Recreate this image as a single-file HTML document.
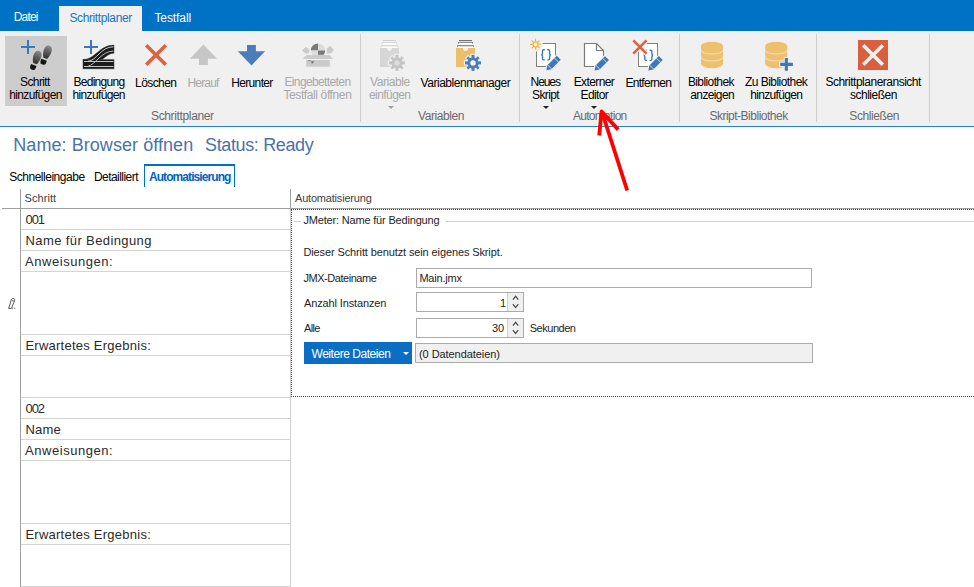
<!DOCTYPE html>
<html><head><meta charset="utf-8"><style>
html,body{margin:0;padding:0;width:974px;height:587px;overflow:hidden;background:#fff;position:relative}
.r{position:absolute}
.t{position:absolute;white-space:pre;font-family:"Liberation Sans",sans-serif}
svg{position:absolute}
</style></head><body>
<div class="r" style="left:0;top:0;width:974px;height:31px;background:#0072C6"></div>
<div class="r" style="left:59px;top:6px;width:83px;height:25px;background:#F0F0F0"></div>
<div class="r" style="left:0;top:31px;width:974px;height:95px;background:#F0F0F0"></div>
<div class="r" style="left:0;top:126px;width:974px;height:1px;background:#2A7FCB"></div>
<div class="r" style="left:5px;top:36px;width:62px;height:70px;background:#CDCDCD"></div>
<div class="r" style="left:360px;top:34px;width:1px;height:88px;background:#CECECE"></div>
<div class="r" style="left:519px;top:34px;width:1px;height:88px;background:#CECECE"></div>
<div class="r" style="left:679px;top:34px;width:1px;height:88px;background:#CECECE"></div>
<div class="r" style="left:816px;top:34px;width:1px;height:88px;background:#CECECE"></div>
<div class="r" style="left:929px;top:34px;width:1px;height:88px;background:#CECECE"></div>
<div class="t" id="tab1" style="left:13.80px;top:11.00px;font-size:12px;line-height:12px;letter-spacing:-0.850px;color:#FFFFFF;font-weight:normal">Datei</div>
<div class="t" id="tab2" style="left:69.40px;top:12.00px;font-size:12px;line-height:12px;letter-spacing:-0.375px;color:#1B72C4;font-weight:normal">Schrittplaner</div>
<div class="t" id="tab3" style="left:154.40px;top:12.00px;font-size:12px;line-height:12px;letter-spacing:-0.086px;color:#FFFFFF;font-weight:normal">Testfall</div>
<div class="t" id="b1a" style="left:20.00px;top:76.00px;font-size:12px;line-height:12px;letter-spacing:-0.600px;color:#000000;font-weight:normal">Schritt</div>
<div class="t" id="b1b" style="left:9.20px;top:89.00px;font-size:12px;line-height:12px;letter-spacing:-0.611px;color:#000000;font-weight:normal">hinzufügen</div>
<div class="t" id="b2a" style="left:73.50px;top:76.00px;font-size:12px;line-height:12px;letter-spacing:-0.725px;color:#000000;font-weight:normal">Bedingung</div>
<div class="t" id="b2b" style="left:72.40px;top:89.00px;font-size:12px;line-height:12px;letter-spacing:-0.622px;color:#000000;font-weight:normal">hinzufügen</div>
<div class="t" id="b3" style="left:135.10px;top:76.50px;font-size:12px;line-height:12px;letter-spacing:-0.583px;color:#000000;font-weight:normal">Löschen</div>
<div class="t" id="b4" style="left:187.40px;top:76.50px;font-size:12px;line-height:12px;letter-spacing:-0.800px;color:#A8A8A8;font-weight:normal">Herauf</div>
<div class="t" id="b5" style="left:231.30px;top:76.50px;font-size:12px;line-height:12px;letter-spacing:-0.671px;color:#000000;font-weight:normal">Herunter</div>
<div class="t" id="b6a" style="left:284.40px;top:76.00px;font-size:12px;line-height:12px;letter-spacing:-0.617px;color:#A8A8A8;font-weight:normal">Eingebetteten</div>
<div class="t" id="b6b" style="left:283.40px;top:89.00px;font-size:12px;line-height:12px;letter-spacing:-0.386px;color:#A8A8A8;font-weight:normal">Testfall öffnen</div>
<div class="t" id="b7a" style="left:370.00px;top:76.00px;font-size:12px;line-height:12px;letter-spacing:-0.429px;color:#A8A8A8;font-weight:normal">Variable</div>
<div class="t" id="b7b" style="left:369.00px;top:88.50px;font-size:12px;line-height:12px;letter-spacing:-0.571px;color:#A8A8A8;font-weight:normal">einfügen</div>
<div class="t" id="b8" style="left:420.60px;top:76.50px;font-size:12px;line-height:12px;letter-spacing:-0.473px;color:#000000;font-weight:normal">Variablenmanager</div>
<div class="t" id="b9a" style="left:530.60px;top:76.00px;font-size:12px;line-height:12px;letter-spacing:-1.100px;color:#000000;font-weight:normal">Neues</div>
<div class="t" id="b9b" style="left:532.00px;top:88.50px;font-size:12px;line-height:12px;letter-spacing:-0.600px;color:#000000;font-weight:normal">Skript</div>
<div class="t" id="b10a" style="left:573.70px;top:76.00px;font-size:12px;line-height:12px;letter-spacing:-0.614px;color:#000000;font-weight:normal">Externer</div>
<div class="t" id="b10b" style="left:580.60px;top:88.50px;font-size:12px;line-height:12px;letter-spacing:-0.640px;color:#000000;font-weight:normal">Editor</div>
<div class="t" id="b11" style="left:625.50px;top:76.50px;font-size:12px;line-height:12px;letter-spacing:-0.713px;color:#000000;font-weight:normal">Entfernen</div>
<div class="t" id="b12a" style="left:687.90px;top:76.00px;font-size:12px;line-height:12px;letter-spacing:-0.600px;color:#000000;font-weight:normal">Bibliothek</div>
<div class="t" id="b12b" style="left:690.30px;top:88.50px;font-size:12px;line-height:12px;letter-spacing:-0.629px;color:#000000;font-weight:normal">anzeigen</div>
<div class="t" id="b13a" style="left:745.00px;top:76.00px;font-size:12px;line-height:12px;letter-spacing:-0.542px;color:#000000;font-weight:normal">Zu Bibliothek</div>
<div class="t" id="b13b" style="left:750.20px;top:88.50px;font-size:12px;line-height:12px;letter-spacing:-0.656px;color:#000000;font-weight:normal">hinzufügen</div>
<div class="t" id="b14a" style="left:825.40px;top:76.00px;font-size:12px;line-height:12px;letter-spacing:-0.495px;color:#000000;font-weight:normal">Schrittplaneransicht</div>
<div class="t" id="b14b" style="left:850.00px;top:88.50px;font-size:12px;line-height:12px;letter-spacing:-0.500px;color:#000000;font-weight:normal">schließen</div>
<div class="t" id="g1" style="left:151.00px;top:110.00px;font-size:12px;line-height:12px;letter-spacing:-0.358px;color:#6A6A6A;font-weight:normal">Schrittplaner</div>
<div class="t" id="g2" style="left:418.00px;top:109.50px;font-size:12px;line-height:12px;letter-spacing:-0.413px;color:#6A6A6A;font-weight:normal">Variablen</div>
<div class="t" id="g3" style="left:572.90px;top:110.00px;font-size:12px;line-height:12px;letter-spacing:-0.700px;color:#6A6A6A;font-weight:normal">Automation</div>
<div class="t" id="g4" style="left:709.40px;top:109.50px;font-size:12px;line-height:12px;letter-spacing:-0.494px;color:#6A6A6A;font-weight:normal">Skript-Bibliothek</div>
<div class="t" id="g5" style="left:849.30px;top:109.50px;font-size:12px;line-height:12px;letter-spacing:-0.412px;color:#6A6A6A;font-weight:normal">Schließen</div>
<div class="r" style="left:388px;top:106px;width:0;height:0;border-left:3px solid transparent;border-right:3px solid transparent;border-top:3px solid #A0A0A0"></div>
<div class="r" style="left:543px;top:106px;width:0;height:0;border-left:3px solid transparent;border-right:3px solid transparent;border-top:3px solid #1E1E1E"></div>
<div class="r" style="left:591px;top:106px;width:0;height:0;border-left:3px solid transparent;border-right:3px solid transparent;border-top:3px solid #1E1E1E"></div>
<div class="t" id="title" style="left:13.30px;top:136.00px;font-size:18px;line-height:18px;letter-spacing:0.058px;color:#4A72AA;font-weight:normal">Name: Browser öffnen</div>
<div class="t" id="title2" style="left:205.10px;top:136.00px;font-size:18px;line-height:18px;letter-spacing:-0.375px;color:#4A72AA;font-weight:normal">Status: Ready</div>
<div class="t" id="st1" style="left:9.20px;top:171.00px;font-size:12px;line-height:12px;letter-spacing:-0.477px;color:#000000;font-weight:normal">Schnelleingabe</div>
<div class="t" id="st2" style="left:93.90px;top:171.00px;font-size:12px;line-height:12px;letter-spacing:-0.540px;color:#000000;font-weight:normal">Detailliert</div>
<div class="r" style="left:144px;top:164px;width:89px;height:21px;border:1px solid #0072C6;border-top:2px solid #0072C6;border-bottom:none"></div>
<div class="t" id="st3" style="left:148.90px;top:171.00px;font-size:12px;line-height:12px;letter-spacing:-0.914px;color:#0064C4;font-weight:bold">Automatisierung</div>
<div class="r" style="left:20px;top:189px;width:1px;height:398px;background:#A0A0A0"></div>
<div class="r" style="left:290px;top:189px;width:1px;height:20px;background:#A0A0A0"></div>
<div class="r" style="left:2px;top:208px;width:972px;height:1px;background:#A0A0A0"></div>
<div class="t" id="h1" style="left:24.60px;top:193.00px;font-size:11px;line-height:11px;letter-spacing:0.067px;color:#404040;font-weight:normal">Schritt</div>
<div class="t" id="h2" style="left:295.00px;top:193.00px;font-size:11px;line-height:11px;letter-spacing:-0.193px;color:#404040;font-weight:normal">Automatisierung</div>
<div class="r" style="left:290px;top:209px;width:1px;height:378px;background:#D0D0D0"></div>
<div class="r" style="left:21px;top:229px;width:269px;height:1px;background:#D4D4D4"></div>
<div class="r" style="left:21px;top:250px;width:269px;height:1px;background:#D4D4D4"></div>
<div class="r" style="left:21px;top:271px;width:269px;height:1px;background:#D4D4D4"></div>
<div class="r" style="left:21px;top:334px;width:269px;height:1px;background:#D4D4D4"></div>
<div class="r" style="left:21px;top:355px;width:269px;height:1px;background:#D4D4D4"></div>
<div class="r" style="left:21px;top:397px;width:269px;height:1px;background:#D4D4D4"></div>
<div class="r" style="left:21px;top:418px;width:269px;height:1px;background:#D4D4D4"></div>
<div class="r" style="left:21px;top:439px;width:269px;height:1px;background:#D4D4D4"></div>
<div class="r" style="left:21px;top:460px;width:269px;height:1px;background:#D4D4D4"></div>
<div class="r" style="left:21px;top:523px;width:269px;height:1px;background:#D4D4D4"></div>
<div class="r" style="left:21px;top:544px;width:269px;height:1px;background:#D4D4D4"></div>
<div class="r" style="left:21px;top:586px;width:269px;height:1px;background:#D4D4D4"></div>
<div class="t" id="c1" style="left:25.50px;top:213.00px;font-size:13px;line-height:13px;letter-spacing:-1.050px;color:#2A2A2A;font-weight:normal">001</div>
<div class="t" id="c2" style="left:25.50px;top:234.00px;font-size:13px;line-height:13px;letter-spacing:0.394px;color:#2A2A2A;font-weight:normal">Name für Bedingung</div>
<div class="t" id="c3" style="left:25.10px;top:255.00px;font-size:13px;line-height:13px;letter-spacing:0.527px;color:#2A2A2A;font-weight:normal">Anweisungen:</div>
<div class="t" id="c4" style="left:25.40px;top:339.00px;font-size:13px;line-height:13px;letter-spacing:0.247px;color:#2A2A2A;font-weight:normal">Erwartetes Ergebnis:</div>
<div class="t" id="c5" style="left:25.50px;top:402.00px;font-size:13px;line-height:13px;letter-spacing:-1.050px;color:#2A2A2A;font-weight:normal">002</div>
<div class="t" id="c6" style="left:25.50px;top:423.00px;font-size:13px;line-height:13px;letter-spacing:0.167px;color:#2A2A2A;font-weight:normal">Name</div>
<div class="t" id="c7" style="left:25.10px;top:444.00px;font-size:13px;line-height:13px;letter-spacing:0.527px;color:#2A2A2A;font-weight:normal">Anweisungen:</div>
<div class="t" id="c8" style="left:25.40px;top:528.00px;font-size:13px;line-height:13px;letter-spacing:0.247px;color:#2A2A2A;font-weight:normal">Erwartetes Ergebnis:</div>
<div class="r" style="left:291px;top:209px;width:683px;height:188px;border-top:1px dotted #404040;border-left:1px dotted #404040;border-bottom:1px dotted #404040;box-sizing:border-box;background:#fff"></div>
<div class="r" style="left:294px;top:221px;width:7px;height:1px;background:#D0D0D0"></div>
<div class="r" style="left:446px;top:221px;width:528px;height:1px;background:#D0D0D0"></div>
<div class="t" id="p1" style="left:303.40px;top:215.00px;font-size:11px;line-height:11px;letter-spacing:-0.176px;color:#1E1E1E;font-weight:normal">JMeter: Name für Bedingung</div>
<div class="t" id="p2" style="left:303.40px;top:247.30px;font-size:11px;line-height:11px;letter-spacing:-0.117px;color:#1E1E1E;font-weight:normal">Dieser Schritt benutzt sein eigenes Skript.</div>
<div class="t" id="p3" style="left:303.40px;top:273.00px;font-size:11px;line-height:11px;letter-spacing:-0.450px;color:#1E1E1E;font-weight:normal">JMX-Dateiname</div>
<div class="t" id="p4" style="left:304.00px;top:298.00px;font-size:11px;line-height:11px;letter-spacing:-0.133px;color:#1E1E1E;font-weight:normal">Anzahl Instanzen</div>
<div class="t" id="p5" style="left:304.00px;top:323.00px;font-size:11px;line-height:11px;letter-spacing:-0.667px;color:#1E1E1E;font-weight:normal">Alle</div>
<div class="t" id="p6" style="left:529.70px;top:323.00px;font-size:11px;line-height:11px;letter-spacing:-0.471px;color:#1E1E1E;font-weight:normal">Sekunden</div>
<div class="r" style="left:416px;top:268px;width:396px;height:20px;border:1px solid #ABABAB;box-sizing:border-box;background:#fff"></div>
<div class="t" id="p7" style="left:419.40px;top:273.00px;font-size:11px;line-height:11px;letter-spacing:-0.200px;color:#1E1E1E;font-weight:normal">Main.jmx</div>
<div class="r" style="left:416px;top:292px;width:108px;height:20px;border:1px solid #ABABAB;box-sizing:border-box;background:#fff"></div>
<div class="r" style="left:507px;top:293px;width:16px;height:18px;background:#F0F0F0;border-left:1px solid #D0D0D0;box-sizing:border-box"></div>
<div class="r" style="left:416px;top:318px;width:108px;height:20px;border:1px solid #ABABAB;box-sizing:border-box;background:#fff"></div>
<div class="r" style="left:507px;top:319px;width:16px;height:18px;background:#F0F0F0;border-left:1px solid #D0D0D0;box-sizing:border-box"></div>
<div class="t" id="p8" style="left:500.00px;top:298.00px;font-size:11px;line-height:11px;letter-spacing:-2.000px;color:#1E1E1E;font-weight:normal">1</div>
<div class="t" id="p9" style="left:492.00px;top:323.00px;font-size:11px;line-height:11px;letter-spacing:0.000px;color:#1E1E1E;font-weight:normal">30</div>
<div class="r" style="left:304px;top:342px;width:108px;height:22px;background:#0A6FC2"></div>
<div class="t" id="p10" style="left:311.50px;top:347.50px;font-size:12px;line-height:12px;letter-spacing:-0.464px;color:#FFFFFF;font-weight:normal">Weitere Dateien</div>
<div class="r" style="left:403px;top:352px;width:0;height:0;border-left:3px solid transparent;border-right:3px solid transparent;border-top:3px solid #fff"></div>
<div class="r" style="left:415px;top:343px;width:398px;height:20px;border:1px solid #ABABAB;box-sizing:border-box;background:#F0F0F0"></div>
<div class="t" id="p11" style="left:419.00px;top:348.50px;font-size:11px;line-height:11px;letter-spacing:-0.067px;color:#1E1E1E;font-weight:normal">(0 Datendateien)</div>
<svg style="position:absolute;left:0;top:0" width="974" height="587" viewBox="0 0 974 587"><rect x="21" y="46" width="14" height="2" fill="#3B78BE"/><rect x="27" y="40" width="2" height="14" fill="#3B78BE"/>
<defs><linearGradient id="fp" x1="0" y1="0" x2="0" y2="1"><stop offset="0" stop-color="#8C8C8C"/><stop offset="1" stop-color="#2E2E2E"/></linearGradient></defs>
<g transform="translate(36.8,57.6) rotate(20)"><path d="M-1.6 6.2 C-4.6 2 -5.2 -7 0 -7 C5.2 -7 4.6 1.5 2.2 6.2 Z" fill="url(#fp)"/><path d="M-3.2 8 H2.6 V10.5 Q2.6 13 0 13 H-1 Q-3.2 13 -3.2 10.5 Z" fill="#151515"/></g>
<g transform="translate(47.1,52.4) rotate(20)"><path d="M-1.6 6.2 C-4.6 2 -5.2 -7 0 -7 C5.2 -7 4.6 1.5 2.2 6.2 Z" fill="url(#fp)"/><path d="M-3.2 8 H2.6 V10.5 Q2.6 13 0 13 H-1 Q-3.2 13 -3.2 10.5 Z" fill="#151515"/></g>
<rect x="84" y="46" width="14" height="2" fill="#3B78BE"/><rect x="90" y="40" width="2" height="14" fill="#3B78BE"/>
<path d="M83 59.6 C95 59.6 99.5 45.1 114 45.1 L114 53.2 C107 53.2 103.5 60.5 98.5 60.5 L83 60.5 Z" fill="#1C1C1C" stroke="#3A3A3A" stroke-width="0.8" stroke-opacity="0.6"/>
<rect x="83" y="59.6" width="31" height="9.2" fill="#1C1C1C" stroke="#3A3A3A" stroke-width="0.8" stroke-opacity="0.6"/>
<path d="M84 61.5 H113.5 M84 66.5 H113.5" stroke="#D8D8D8" stroke-width="0.9"/>
<path d="M88 61.2 C96.5 61 100.5 46.8 113.5 46.8" fill="none" stroke="#D8D8D8" stroke-width="0.9"/>
<path d="M87.5 66.5 C96 64.5 101 51.2 113.5 51" fill="none" stroke="#C8C8C8" stroke-width="0.9"/>
<path d="M146.2 45.2 L165.8 64.8 M165.8 45.2 L146.2 64.8" stroke="#DB6440" stroke-width="3.6"/>
<polygon points="203.4,44.5 217.1,58.8 207.9,58.8 207.9,64.9 199,64.9 199,58.8 189.8,58.8" fill="#C6C6C6"/>
<polygon points="247,45.1 255.9,45.1 255.9,51.2 265.1,51.2 251.5,65.5 237.8,51.2 247,51.2" fill="#4A7EBB"/>
<path d="M318 50.6 V43.4 A7.2 7.2 0 0 0 310.8 50.6 Z" fill="#7A7A7A"/>
<path d="M318 50.6 H325.2 A7.2 7.2 0 0 0 318 43.4 Z" fill="#DCDCDC"/>
<path d="M318 50.6 H310.8 A7.2 7.2 0 0 0 318 57.8 Z" fill="#DCDCDC"/>
<path d="M318 50.6 V57.8 A7.2 7.2 0 0 0 325.2 50.6 Z" fill="#7A7A7A"/>
<rect x="300" y="54.8" width="36" height="5" fill="#F0F0F0"/>
<polygon points="302,50.5 306,46.7 309.2,49.6 309.2,53.6 305.5,53.6" fill="#CACACA"/>
<polygon points="334,50 330,45.8 326.8,48.8 326.8,53.6 330.5,53.6" fill="#CACACA"/>
<polygon points="306.4,55.1 329.6,55.1 333,58.9 302.9,58.9" fill="#CBCBCB"/>
<rect x="306.1" y="60" width="23.8" height="6.7" fill="#CBCBCB"/>
<polygon points="311,61.5 314.5,61 312,64" fill="#707070"/><path d="M308 60.7 H311" stroke="#808080" stroke-width="0.8"/>
<rect x="382" y="41" width="15" height="7" fill="#FAFAFA"/><path d="M383 40.5 H396" stroke="#CFCFCF" stroke-width="1"/><path d="M382.5 43.5 V42.3 H396.5 V43.5" fill="none" stroke="#CFCFCF" stroke-width="1"/><path d="M381.5 46.8 V45.7 H397.5 V46.8" fill="none" stroke="#CFCFCF" stroke-width="1"/><path d="M380 48 H386.8 C387 52 392 52 392.2 48 H399 V67 H380 Z" fill="#D6D6D6"/><g transform="translate(397,62.9)" fill="#F0F0F0" stroke="#F0F0F0" stroke-width="2.2"><rect x="-1.5" y="-8" width="3.0" height="4" transform="rotate(0)"/><rect x="-1.3" y="-8" width="2.6" height="4" transform="rotate(45)"/><rect x="-1.5" y="-8" width="3.0" height="4" transform="rotate(90)"/><rect x="-1.3" y="-8" width="2.6" height="4" transform="rotate(135)"/><rect x="-1.5" y="-8" width="3.0" height="4" transform="rotate(180)"/><rect x="-1.3" y="-8" width="2.6" height="4" transform="rotate(225)"/><rect x="-1.5" y="-8" width="3.0" height="4" transform="rotate(270)"/><rect x="-1.3" y="-8" width="2.6" height="4" transform="rotate(315)"/><circle r="5.6"/></g><g transform="translate(397,62.9)" fill="#C4C4C4"><rect x="-1.5" y="-8" width="3.0" height="4" transform="rotate(0)"/><rect x="-1.3" y="-8" width="2.6" height="4" transform="rotate(45)"/><rect x="-1.5" y="-8" width="3.0" height="4" transform="rotate(90)"/><rect x="-1.3" y="-8" width="2.6" height="4" transform="rotate(135)"/><rect x="-1.5" y="-8" width="3.0" height="4" transform="rotate(180)"/><rect x="-1.3" y="-8" width="2.6" height="4" transform="rotate(225)"/><rect x="-1.5" y="-8" width="3.0" height="4" transform="rotate(270)"/><rect x="-1.3" y="-8" width="2.6" height="4" transform="rotate(315)"/><circle r="5.6"/></g><circle cx="397" cy="62.9" r="2.7" fill="#DDDDDD"/>
<rect x="458" y="41" width="15" height="7" fill="#FAFAFA"/><path d="M459 40.5 H472" stroke="#707070" stroke-width="1"/><path d="M458.5 43.5 V42.3 H472.5 V43.5" fill="none" stroke="#707070" stroke-width="1"/><path d="M457.5 46.8 V45.7 H473.5 V46.8" fill="none" stroke="#707070" stroke-width="1"/><path d="M456 48 H462.8 C463 52 468 52 468.2 48 H475 V67 H456 Z" fill="#EDBF6B"/><g transform="translate(473,62.9)" fill="#F0F0F0" stroke="#F0F0F0" stroke-width="2.2"><rect x="-1.5" y="-8" width="3.0" height="4" transform="rotate(0)"/><rect x="-1.3" y="-8" width="2.6" height="4" transform="rotate(45)"/><rect x="-1.5" y="-8" width="3.0" height="4" transform="rotate(90)"/><rect x="-1.3" y="-8" width="2.6" height="4" transform="rotate(135)"/><rect x="-1.5" y="-8" width="3.0" height="4" transform="rotate(180)"/><rect x="-1.3" y="-8" width="2.6" height="4" transform="rotate(225)"/><rect x="-1.5" y="-8" width="3.0" height="4" transform="rotate(270)"/><rect x="-1.3" y="-8" width="2.6" height="4" transform="rotate(315)"/><circle r="5.6"/></g><g transform="translate(473,62.9)" fill="#4A7EBB"><rect x="-1.5" y="-8" width="3.0" height="4" transform="rotate(0)"/><rect x="-1.3" y="-8" width="2.6" height="4" transform="rotate(45)"/><rect x="-1.5" y="-8" width="3.0" height="4" transform="rotate(90)"/><rect x="-1.3" y="-8" width="2.6" height="4" transform="rotate(135)"/><rect x="-1.5" y="-8" width="3.0" height="4" transform="rotate(180)"/><rect x="-1.3" y="-8" width="2.6" height="4" transform="rotate(225)"/><rect x="-1.5" y="-8" width="3.0" height="4" transform="rotate(270)"/><rect x="-1.3" y="-8" width="2.6" height="4" transform="rotate(315)"/><circle r="5.6"/></g><circle cx="473" cy="62.9" r="2.7" fill="#FFFFFF"/>
<rect x="536.5" y="43.5" width="19" height="23" fill="#FFFFFF" stroke="#808080" stroke-width="1"/>
<circle cx="535.6" cy="44.3" r="7.2" fill="#F0F0F0"/>
<g transform="translate(535.6,44.3)" fill="#EFB23A"><rect x="-0.65" y="-5.6" width="1.1" height="3.0" transform="rotate(0)"/><rect x="-0.65" y="-5.6" width="1.1" height="3.0" transform="rotate(45)"/><rect x="-0.65" y="-5.6" width="1.1" height="3.0" transform="rotate(90)"/><rect x="-0.65" y="-5.6" width="1.1" height="3.0" transform="rotate(135)"/><rect x="-0.65" y="-5.6" width="1.1" height="3.0" transform="rotate(180)"/><rect x="-0.65" y="-5.6" width="1.1" height="3.0" transform="rotate(225)"/><rect x="-0.65" y="-5.6" width="1.1" height="3.0" transform="rotate(270)"/><rect x="-0.65" y="-5.6" width="1.1" height="3.0" transform="rotate(315)"/><circle r="2.5" fill="#FFF6E0" stroke="#EFB23A" stroke-width="1.2"/></g>
<path d="M544.8 49.7 H543.5999999999999 Q542.4999999999999 49.7 542.4999999999999 51.1 V53.4 Q542.4999999999999 54.8 541.1999999999999 54.8 Q542.4999999999999 54.8 542.4999999999999 56.2 V58.5 Q542.4999999999999 59.9 543.5999999999999 59.9 H544.8 M547.3 49.7 H548.5 Q549.6 49.7 549.6 51.1 V53.4 Q549.6 54.8 550.9 54.8 Q549.6 54.8 549.6 56.2 V58.5 Q549.6 59.9 548.5 59.9 H547.3" fill="none" stroke="#3F78B6" stroke-width="1.4"/>
<g transform="translate(546.4,70.2) rotate(-45)"><polygon points="0,0 4.2,-2.8 17.5,-2.8 17.5,2.8 4.2,2.8" fill="#F0F0F0" stroke="#F0F0F0" stroke-width="2.4" stroke-linejoin="round"/><polygon points="0,0 4.2,-2.8 17.5,-2.8 17.5,2.8 4.2,2.8" fill="#3F78B6"/><line x1="4.6" y1="-2.8" x2="4.6" y2="2.8" stroke="#fff" stroke-width="0.7"/><line x1="14.3" y1="-2.8" x2="14.3" y2="2.8" stroke="#fff" stroke-width="0.7"/></g>
<path d="M584.5 43.5 H596.5 L603.5 50.5 V66.5 H584.5 Z" fill="#FFFFFF" stroke="#7A7A7A" stroke-width="1.2"/>
<path d="M596.5 43.5 V50.5 H603.5" fill="none" stroke="#7A7A7A" stroke-width="1.2"/>
<g transform="translate(594.6,70.5) rotate(-45)"><polygon points="0,0 4.2,-2.8 17.5,-2.8 17.5,2.8 4.2,2.8" fill="#F0F0F0" stroke="#F0F0F0" stroke-width="2.4" stroke-linejoin="round"/><polygon points="0,0 4.2,-2.8 17.5,-2.8 17.5,2.8 4.2,2.8" fill="#3F78B6"/><line x1="4.6" y1="-2.8" x2="4.6" y2="2.8" stroke="#fff" stroke-width="0.7"/><line x1="14.3" y1="-2.8" x2="14.3" y2="2.8" stroke="#fff" stroke-width="0.7"/></g>
<rect x="638.5" y="43.5" width="19" height="23" fill="#FFFFFF" stroke="#808080" stroke-width="1"/>
<path d="M647.1 50.2 H645.9 Q644.8 50.2 644.8 51.6 V53.9 Q644.8 55.3 643.5 55.3 Q644.8 55.3 644.8 56.7 V59.0 Q644.8 60.4 645.9 60.4 H647.1 M649.6 50.2 H650.8000000000001 Q651.9000000000001 50.2 651.9000000000001 51.6 V53.9 Q651.9000000000001 55.3 653.2 55.3 Q651.9000000000001 55.3 651.9000000000001 56.7 V59.0 Q651.9000000000001 60.4 650.8000000000001 60.4 H649.6" fill="none" stroke="#3F78B6" stroke-width="1.4"/>
<path d="M633.3 40.4 L646.5 53.6 M646.5 40.4 L633.3 53.6" stroke="#F0F0F0" stroke-width="5"/>
<path d="M633.3 40.4 L646.5 53.6 M646.5 40.4 L633.3 53.6" stroke="#DB6440" stroke-width="2.6"/>
<g transform="translate(648.4,70.4) rotate(-45)"><polygon points="0,0 4.2,-2.8 17.5,-2.8 17.5,2.8 4.2,2.8" fill="#F0F0F0" stroke="#F0F0F0" stroke-width="2.4" stroke-linejoin="round"/><polygon points="0,0 4.2,-2.8 17.5,-2.8 17.5,2.8 4.2,2.8" fill="#3F78B6"/><line x1="4.6" y1="-2.8" x2="4.6" y2="2.8" stroke="#fff" stroke-width="0.7"/><line x1="14.3" y1="-2.8" x2="14.3" y2="2.8" stroke="#fff" stroke-width="0.7"/></g>
<path d="M701 46 A11 4.2 0 0 1 723 46 V64 A11 4.2 0 0 1 701 64 Z" fill="#EDC06E"/><path d="M701 50.2 A11 3.8 0 0 0 723 50.2" fill="none" stroke="#F6E2BC" stroke-width="1"/><path d="M701 57.2 A11 3.8 0 0 0 723 57.2" fill="none" stroke="#F6E2BC" stroke-width="1"/>
<path d="M765.2 46 A11 4.2 0 0 1 787.2 46 V64 A11 4.2 0 0 1 765.2 64 Z" fill="#EDC06E"/><path d="M765.2 50.2 A11 3.8 0 0 0 787.2 50.2" fill="none" stroke="#F6E2BC" stroke-width="1"/><path d="M765.2 57.2 A11 3.8 0 0 0 787.2 57.2" fill="none" stroke="#F6E2BC" stroke-width="1"/>
<path d="M780.2 62.7 h12.7 v3.2 h-12.7 Z M784.8 58.1 h3.1 v12.6 h-3.1 Z" fill="#F0F0F0" stroke="#F0F0F0" stroke-width="2"/>
<path d="M780.2 62.7 h12.7 v3.2 h-12.7 Z M784.8 58.1 h3.1 v12.6 h-3.1 Z" fill="#3F78B6"/>
<rect x="858" y="40" width="30" height="30" fill="#D9603E"/>
<path d="M863.2 45.2 L882.8 64.8 M882.8 45.2 L863.2 64.8" stroke="#F0F0F0" stroke-width="3.6"/>
<path d="M8.6 308.4 L11.4 299.6 Q12.2 297.9 13.8 298.4 Q15.1 299.1 14.5 300.8 L11.4 308.4 Z" fill="none" stroke="#4A4A4A" stroke-width="0.9"/>
<path d="M11.6 300.2 L14.2 301.4" stroke="#4A4A4A" stroke-width="0.8"/>
<rect x="12.2" y="307.8" width="1" height="1" fill="#555"/><rect x="14.3" y="307.8" width="1" height="1" fill="#555"/>
<path d="M512.9 299.6 L515.6 296.3 L518.3 299.6" fill="none" stroke="#505050" stroke-width="1.3"/>
<path d="M512.9 304.2 L515.6 307.5 L518.3 304.2" fill="none" stroke="#505050" stroke-width="1.3"/>
<path d="M512.9 325.6 L515.6 322.3 L518.3 325.6" fill="none" stroke="#505050" stroke-width="1.3"/>
<path d="M512.9 330.2 L515.6 333.5 L518.3 330.2" fill="none" stroke="#505050" stroke-width="1.3"/>
<path d="M627.2 190.5 L602.2 112.5" stroke="#FF0000" stroke-width="3.8" fill="none"/>
<path d="M599.2 135.5 L601.6 111.5 L618.2 129.6" stroke="#FF0000" stroke-width="3.8" fill="none" stroke-linejoin="round"/></svg>
</body></html>
